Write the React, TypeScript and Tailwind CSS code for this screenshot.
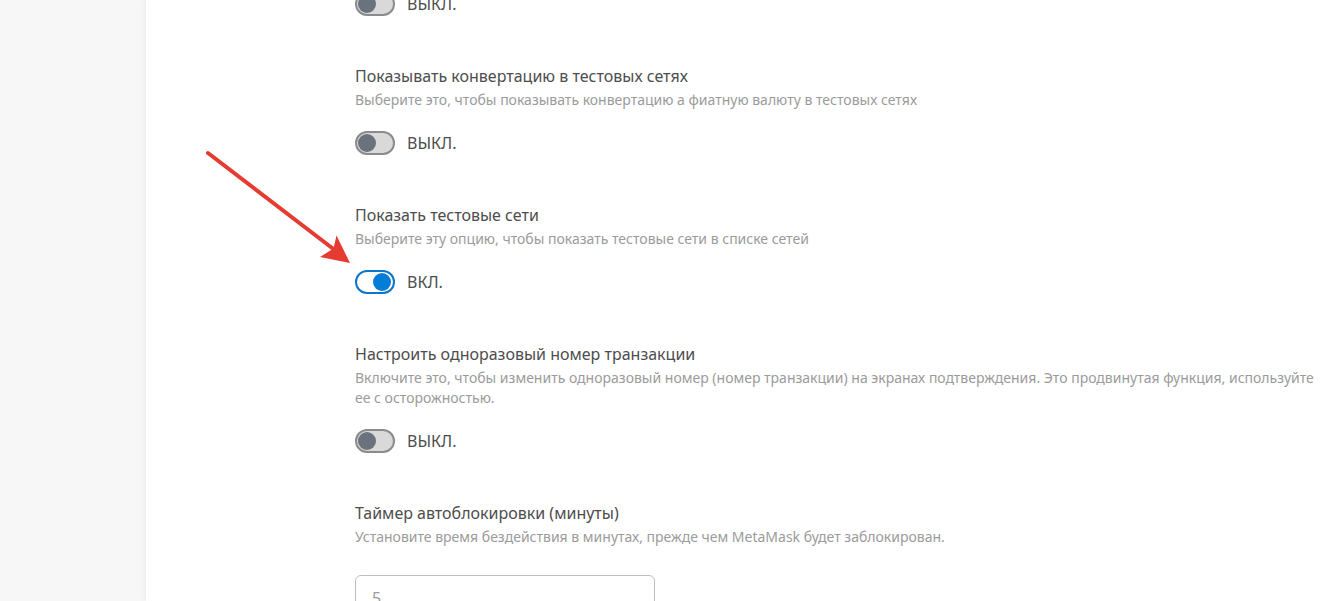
import { useId, useState } from 'react';

type ToggleProps = { label: string; initial?: boolean };

function Toggle({ label, initial = false }: ToggleProps) {
  const [on, setOn] = useState(initial);
  return (
    <label className="flex w-fit cursor-pointer items-center gap-3 text-base text-[#4d4d4d]">
      <input
        type="checkbox"
        role="switch"
        aria-label={label}
        checked={on}
        onChange={(e) => setOn(e.target.checked)}
        className="flex h-6 w-10 shrink-0 cursor-pointer appearance-none items-center rounded-full border-2 border-[#8b8b8d] bg-[#d9d9d9] pr-0.5 pl-px before:size-[18px] before:rounded-full before:bg-[#6a737d] before:content-[''] checked:justify-end checked:border-[#0b76c9] checked:bg-white checked:before:bg-[#037dd6]"
      />
      <span>{on ? 'ВКЛ.' : 'ВЫКЛ.'}</span>
    </label>
  );
}

type SettingProps = { title: string; description: string; initial?: boolean };

function Setting({ title, description, initial }: SettingProps) {
  return (
    <section>
      <h2 className="text-base text-[#4d4d4d]">{title}</h2>
      <p className="mt-0.5 mb-[21px] text-sm leading-5 text-[#9b9b9b]">{description}</p>
      <Toggle label={title} initial={initial} />
    </section>
  );
}

function Arrow() {
  return (
    <svg
      className="pointer-events-none absolute top-[150px] left-[60px]"
      width="146"
      height="116"
      viewBox="0 0 146 116"
      aria-hidden="true"
    >
      <path d="M2 3 L130 101" stroke="#e53b30" strokeWidth="4" strokeLinecap="round" />
      <path d="M144 113 L130.500 85.500 L127.500 98.500 L114 107 Z" fill="#e53b30" />
    </svg>
  );
}

export default function App() {
  const timerId = useId();
  return (
    <div className="flex h-screen overflow-hidden bg-[#f7f7f7] font-['Noto_Sans',sans-serif]">
      <aside className="w-[146px] shrink-0" />
      <main className="relative min-w-0 flex-1 bg-white pr-2 pl-[209px] shadow-[0_0_7px_rgba(0,0,0,0.08)]">
        <div className="-mt-2 flex flex-col gap-12">
          <Toggle label="Предыдущая настройка" />
          <Setting
            title="Показывать конвертацию в тестовых сетях"
            description="Выберите это, чтобы показывать конвертацию а фиатную валюту в тестовых сетях"
          />
          <Setting
            title="Показать тестовые сети"
            description="Выберите эту опцию, чтобы показать тестовые сети в списке сетей"
            initial
          />
          <Setting
            title="Настроить одноразовый номер транзакции"
            description="Включите это, чтобы изменить одноразовый номер (номер транзакции) на экранах подтверждения. Это продвинутая функция, используйте ее с осторожностью."
          />
          <section>
            <label htmlFor={timerId} className="block text-base text-[#4d4d4d]">
              Таймер автоблокировки (минуты)
            </label>
            <p className="mt-0.5 mb-7 text-sm leading-5 text-[#9b9b9b]">
              Установите время бездействия в минутах, прежде чем MetaMask будет заблокирован.
            </p>
            <input
              id={timerId}
              type="text"
              inputMode="numeric"
              placeholder="5"
              className="block h-[46px] w-[300px] rounded-md border border-[#bbc0c5] bg-white px-4 text-base text-[#4d4d4d] placeholder:text-[#9b9b9b]"
            />
          </section>
        </div>
        <Arrow />
      </main>
    </div>
  );
}
